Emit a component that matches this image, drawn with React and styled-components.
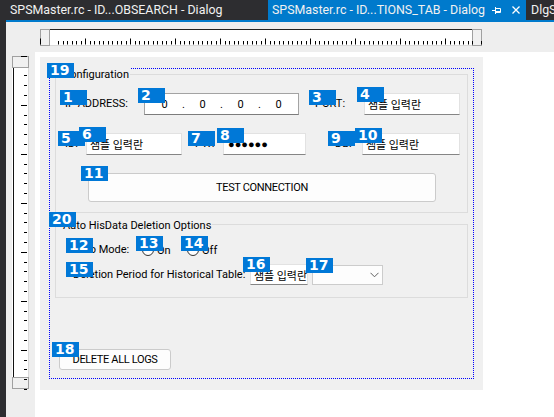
import React from "react";
import styled, { createGlobalStyle } from "styled-components";

const GlobalStyle = createGlobalStyle`
  html, body { margin: 0; padding: 0; background: #eeeeee; }
  body { width: 554px; height: 417px; overflow: hidden; font-family: Roboto, "Liberation Sans", sans-serif; }
  * { box-sizing: border-box; }
`;

const Window = styled.div`
  display: flex;
  width: 554px;
  height: 417px;
  overflow: hidden;
`;

const SideStrip = styled.div`
  width: 6px;
  flex: none;
  background: #2d2d30;
`;

const Main = styled.div`
  flex: 1;
  min-width: 0;
  display: flex;
  flex-direction: column;
`;

const TabBar = styled.div`
  height: 22px;
  flex: none;
  display: flex;
  background: #2d2d30;
  border-bottom: 2px solid #007acc;
`;

const Tab = styled.div`
  width: ${(p) => (p.$w ? `${p.$w}px` : "auto")};
  flex: ${(p) => (p.$w ? "none" : "1")};
  min-width: 0;
  display: flex;
  align-items: center;
  padding-left: ${(p) => p.$pl ?? 4}px;
  padding-right: ${(p) => (p.$active ? 6 : 0)}px;
  background: ${(p) => (p.$active ? "#007acc" : "transparent")};
  color: #f1f1f1;
  overflow: hidden;
`;

const TabTitle = styled.span`
  font-family: Roboto, "Liberation Sans", sans-serif;
  font-size: 12.4px;
  white-space: nowrap;
  line-height: 20px;
`;

const TabIcons = styled.div`
  margin-left: auto;
  display: flex;
  align-items: center;
  gap: 11px;
`;

const Designer = styled.div`
  flex: 1;
  display: flex;
  flex-direction: column;
  background: #eeeeee;
  min-height: 0;
`;

const HRulerBox = styled.div`
  margin: 7px 0 0 34px;
  height: 17px;
  flex: none;
  display: flex;
`;

const DesignBody = styled.div`
  flex: 1;
  display: flex;
  margin-top: 6px;
  min-height: 0;
`;

const VRulerBox = styled.div`
  margin: 4px 0 0 6px;
  width: 17px;
  flex: none;
  display: flex;
  align-self: flex-start;
`;

const Canvas = styled.div`
  flex: 1;
  margin-left: 6px;
  background: #ffffff;
  padding: 5px 0 0 5px;
`;

const Dialog = styled.div`
  width: 443px;
  height: 333px;
  background: #f0f0f0;
  padding: 11px 9px 11px 9px;
  font-family: Roboto, "Liberation Sans", sans-serif;
  font-size: 11px;
  color: #000;
`;

const SelectionFrame = styled.div`
  height: 100%;
  border: 1px dotted #0000ff;
  display: flex;
  flex-direction: column;
  align-items: flex-start;
`;

const Group = styled.div`
  position: relative;
  margin: ${(p) => p.$mt}px 0 0 5px;
  width: 413px;
  height: ${(p) => p.$h}px;
  border: 1px solid #dcdcdc;
  display: flex;
  flex-direction: column;
`;

const Legend = styled.span`
  position: absolute;
  left: 6px;
  top: ${(p) => p.$top ?? -7}px;
  padding: 0 1px;
  background: #f0f0f0;
  line-height: 14px;
  white-space: nowrap;
`;

const Badge = styled.span`
  position: absolute;
  left: ${(p) => p.$x}px;
  top: ${(p) => p.$y}px;
  width: 27px;
  height: 15px;
  padding-left: 3px;
  background: #0078d7;
  color: #ffffff;
  font-family: "DejaVu Sans", sans-serif;
  font-weight: bold;
  font-size: 14px;
  line-height: 15px;
  letter-spacing: 0;
  z-index: 5;
  white-space: nowrap;
`;

const Row = styled.div`
  display: flex;
  align-items: center;
  height: ${(p) => p.$h}px;
  margin-top: ${(p) => p.$mt}px;
`;

const Label = styled.div`
  position: relative;
  flex: none;
  margin-left: ${(p) => p.$ml ?? 0}px;
  width: ${(p) => p.$w}px;
  line-height: 14px;
  white-space: nowrap;
`;

const Edit = styled.div`
  position: relative;
  flex: none;
  margin-left: ${(p) => p.$ml ?? 0}px;
  width: ${(p) => p.$w}px;
  height: ${(p) => p.$h ?? 22}px;
  background: #ffffff;
  border: 1px solid #e2e2e2;
  border-bottom-color: #858585;
  display: flex;
  align-items: center;
  padding-left: 3px;
`;

const EditText = styled.span`
  flex: 1;
  min-width: 0;
  overflow: hidden;
  white-space: nowrap;
  font-family: "Noto Sans CJK KR", "Liberation Sans", sans-serif;
  font-size: 11px;
  line-height: 14px;
`;

const PasswordText = styled.span`
  font-family: "Liberation Sans", sans-serif;
  font-size: 11px;
  line-height: 14px;
  padding-left: 1px;
  white-space: nowrap;
`;

const IpBox = styled.div`
  position: relative;
  flex: none;
  width: ${(p) => p.$w}px;
  height: 22px;
  background: #ffffff;
  border: 1px solid #a3a3a3;
  border-bottom-color: #7c7c7c;
  display: flex;
  align-items: center;
  padding: 0 2px;
`;

const Octet = styled.span`
  width: 35px;
  text-align: center;
`;

const IpDot = styled.span`
  width: 3px;
  text-align: center;
`;

const PushButton = styled.div`
  position: relative;
  flex: none;
  margin-left: ${(p) => p.$ml}px;
  width: ${(p) => p.$w}px;
  height: ${(p) => p.$h}px;
  border: 1px solid #cbcbcb;
  border-radius: 3px;
  background: #fdfdfd;
  display: flex;
  align-items: center;
  justify-content: center;
  letter-spacing: -0.35px;
  white-space: nowrap;
`;

const Radio = styled.div`
  position: relative;
  flex: none;
  width: ${(p) => p.$w}px;
  height: 14px;
  display: flex;
  align-items: center;
  gap: 3px;
`;

const RadioCircle = styled.span`
  width: 12px;
  height: 12px;
  border: 1px solid #333333;
  border-radius: 50%;
  background: #ffffff;
  flex: none;
`;

const Combo = styled.div`
  position: relative;
  flex: none;
  margin-left: ${(p) => p.$ml}px;
  width: ${(p) => p.$w}px;
  height: 20px;
  border: 1px solid #cccccc;
  background: #fdfdfd;
  display: flex;
  align-items: center;
  justify-content: flex-end;
  padding-right: 3px;
`;

const PinIcon = () => (
  <svg width="9" height="9" viewBox="0 0 9 9" fill="none" stroke="#ffffff" strokeWidth="1">
    <path d="M0 4.5H3.5M3.5 1V8M3.5 2.5H8.5V6.5H3.5M3.5 5.5H8.5" />
  </svg>
);

const CloseIcon = () => (
  <svg width="8" height="8" viewBox="0 0 8 8" fill="none" stroke="#ffffff" strokeWidth="1.3">
    <path d="M0.5 0.5L7.5 7.5M7.5 0.5L0.5 7.5" />
  </svg>
);

const Chevron = () => (
  <svg width="9" height="6" viewBox="0 0 9 6" fill="none" stroke="#606060" strokeWidth="1">
    <polyline points="0.5,0.8 4.5,4.8 8.5,0.8" />
  </svg>
);

const HRuler = () => {
  const ticks = [];
  for (let k = 0; k <= 98; k++) {
    if ((k >= 1 && k <= 3) || k === 97) continue;
    const x = Math.floor(0.7 + 4.5 * k) + 0.5;
    const long = k % 10 === 0;
    ticks.push(<line key={k} x1={x} x2={x} y1={long ? 9.5 : 12} y2={15.5} stroke="#000" />);
  }
  return (
    <svg width="442" height="17" viewBox="0 0 442 17">
      <rect x="9" y="0" width="423" height="17" fill="#ffffff" />
      <line x1="9" x2="432" y1="0.5" y2="0.5" stroke="#222" />
      <line x1="9" x2="432" y1="16.5" y2="16.5" stroke="#dadada" />
      <rect x="0.5" y="0.5" width="9" height="16" fill="#f0f0f0" stroke="#a0a0a0" />
      <rect x="432.5" y="0.5" width="9" height="16" fill="#f0f0f0" stroke="#a0a0a0" />
      {ticks}
    </svg>
  );
};

const VRuler = () => {
  const ticks = [];
  for (let k = 0; k <= 34; k++) {
    if (k === 1) continue;
    const y = Math.floor(0.2 + 9.8 * k) + 0.5;
    const long = k % 5 === 0;
    ticks.push(<line key={k} y1={y} y2={y} x1={long ? 9 : 12} x2={15} stroke="#000" />);
  }
  return (
    <svg width="17" height="334" viewBox="0 0 17 334">
      <rect x="0" y="12" width="17" height="310" fill="#ffffff" />
      <line x1="1.5" x2="1.5" y1="12" y2="321" stroke="#111" />
      <line x1="16.5" x2="16.5" y1="12" y2="321" stroke="#dadada" />
      <rect x="0.5" y="0.5" width="16" height="11" fill="#f0f0f0" stroke="#a0a0a0" />
      <rect x="0.5" y="321.5" width="16" height="11" fill="#f0f0f0" stroke="#a0a0a0" />
      {ticks}
    </svg>
  );
};

export default function App() {
  return (
    <>
      <GlobalStyle />
      <Window>
        <SideStrip />
        <Main>
          <TabBar>
            <Tab $w={262}>
              <TabTitle>SPSMaster.rc - ID...OBSEARCH - Dialog</TabTitle>
            </Tab>
            <Tab $w={258} $active>
              <TabTitle>SPSMaster.rc - ID...TIONS_TAB - Dialog</TabTitle>
              <TabIcons>
                <PinIcon />
                <CloseIcon />
              </TabIcons>
            </Tab>
            <Tab $pl={5}>
              <TabTitle>DlgSetup.cpp</TabTitle>
            </Tab>
          </TabBar>
          <Designer>
            <HRulerBox>
              <HRuler />
            </HRulerBox>
            <DesignBody>
              <VRulerBox>
                <VRuler />
              </VRulerBox>
              <Canvas>
                <Dialog>
                  <SelectionFrame>
                    <Group $mt={5} $h={139}>
                      <Legend>Configuration</Legend>
                      <Badge $x={-9} $y={-12}>19</Badge>
                      <Row $mt={18} $h={22}>
                        <Label $ml={9} $w={79}>
                          IP ADDRESS:
                          <Badge $x={-5} $y={-7}>1</Badge>
                        </Label>
                        <IpBox $w={155}>
                          <Octet>0</Octet>
                          <IpDot>.</IpDot>
                          <Octet>0</Octet>
                          <IpDot>.</IpDot>
                          <Octet>0</Octet>
                          <IpDot>.</IpDot>
                          <Octet>0</Octet>
                          <Badge $x={-7} $y={-6}>2</Badge>
                        </IpBox>
                        <Label $ml={16} $w={49}>
                          PORT:
                          <Badge $x={-6} $y={-7}>3</Badge>
                        </Label>
                        <Edit $w={96}>
                          <EditText>샘플 입력란</EditText>
                          <Badge $x={-8} $y={-7}>4</Badge>
                        </Edit>
                      </Row>
                      <Row $mt={18} $h={22}>
                        <Label $ml={9} $w={21}>
                          ID:
                          <Badge $x={-7} $y={-6}>5</Badge>
                        </Label>
                        <Edit $w={96}>
                          <EditText>샘플 입력란</EditText>
                          <Badge $x={-8} $y={-7}>6</Badge>
                        </Edit>
                        <Label $ml={13} $w={28}>
                          PW:
                          <Badge $x={-7} $y={-6}>7</Badge>
                        </Label>
                        <Edit $w={83}>
                          <PasswordText>●●●●●●</PasswordText>
                          <Badge $x={-7} $y={-6}>8</Badge>
                        </Edit>
                        <Label $ml={29} $w={27}>
                          DB:
                          <Badge $x={-7} $y={-6}>9</Badge>
                        </Label>
                        <Edit $w={98}>
                          <EditText>샘플 입력란</EditText>
                          <Badge $x={-8} $y={-6}>10</Badge>
                        </Edit>
                      </Row>
                      <Row $mt={18} $h={29}>
                        <PushButton $ml={32} $w={348} $h={29}>
                          TEST CONNECTION
                          <Badge $x={-8} $y={-8}>11</Badge>
                        </PushButton>
                      </Row>
                    </Group>
                    <Group $mt={11} $h={74}>
                      <Legend $top={-6}>Auto HisData Deletion Options</Legend>
                      <Badge $x={-7} $y={-13}>20</Badge>
                      <Row $mt={18} $h={14}>
                        <Label $ml={17} $w={69}>
                          Auto Mode:
                          <Badge $x={-7} $y={-5}>12</Badge>
                        </Label>
                        <Radio $w={45}>
                          <RadioCircle />
                          On
                          <Badge $x={-6} $y={-7}>13</Badge>
                        </Radio>
                        <Radio $w={40}>
                          <RadioCircle />
                          Off
                          <Badge $x={-6} $y={-7}>14</Badge>
                        </Radio>
                      </Row>
                      <Row $mt={7} $h={21}>
                        <Label $ml={17} $w={177}>
                          Deletion Period for Historical Table:
                          <Badge $x={-7} $y={-6}>15</Badge>
                        </Label>
                        <Edit $w={58} $h={21}>
                          <EditText>샘플 입력란</EditText>
                          <Badge $x={-8} $y={-8}>16</Badge>
                        </Edit>
                        <Combo $ml={4} $w={71}>
                          <Chevron />
                          <Badge $x={-7} $y={-8}>17</Badge>
                        </Combo>
                      </Row>
                    </Group>
                    <Row $mt={51} $h={21}>
                      <PushButton $ml={9} $w={112} $h={21}>
                        DELETE ALL LOGS
                        <Badge $x={-8} $y={-8}>18</Badge>
                      </PushButton>
                    </Row>
                  </SelectionFrame>
                </Dialog>
              </Canvas>
            </DesignBody>
          </Designer>
        </Main>
      </Window>
    </>
  );
}
